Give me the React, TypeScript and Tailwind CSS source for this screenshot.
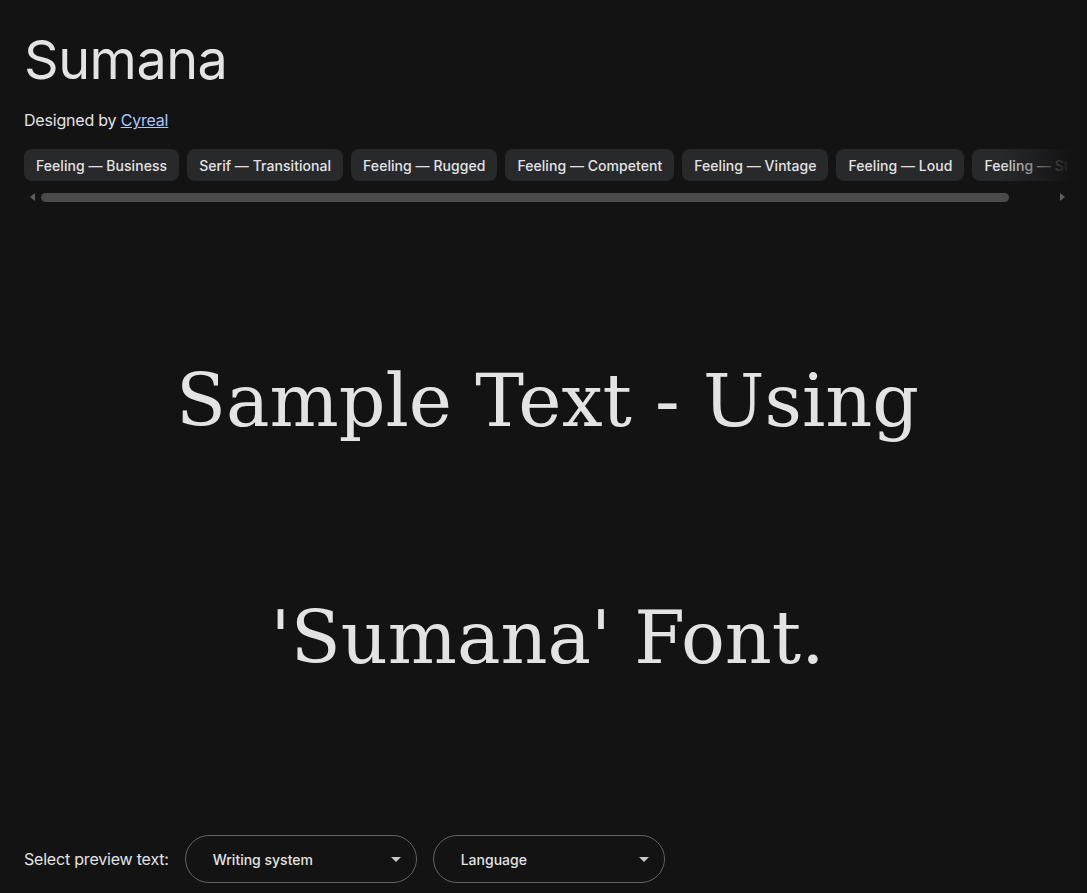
const tags = [
  "Feeling — Business",
  "Serif — Transitional",
  "Feeling — Rugged",
  "Feeling — Competent",
  "Feeling — Vintage",
  "Feeling — Loud",
  "Feeling — Stiff",
]

function Select({ label }: { label: string }) {
  return (
    <button className="flex h-[48px] w-[232px] items-center justify-between rounded-full border border-[#5f6368] pl-[27px] pr-[15px] text-[14px] font-medium text-[#e3e3e3]">
      <span>{label}</span>
      <svg width="10" height="5" viewBox="0 0 10 5">
        <path d="M0 0 L10 0 L5 5 Z" fill="#c4c7c5" />
      </svg>
    </button>
  )
}

export default function App() {
  return (
    <div
      className="flex min-h-[893px] flex-col bg-[#131314] pl-[24px] pr-[16px] text-[#e3e3e3]"
      style={{ fontFamily: "Inter, Roboto, sans-serif" }}
    >
      <h1 className="mt-[24px] text-[54px] leading-[72px] font-normal tracking-[-0.5px]">Sumana</h1>

      <p className="mt-[12px] text-[16px] leading-[24px] tracking-[-0.2px] text-[#e3e3e3]">
        Designed by{" "}
        <a href="#" className="text-[#a8c7fa] underline">
          Cyreal
        </a>
      </p>

      <div className="relative mt-[17px]">
        <div className="flex gap-[8px] overflow-hidden">
          {tags.map((t) => (
            <span
              key={t}
              className="flex h-[32px] shrink-0 items-center rounded-[8px] bg-[#28292b] px-[12px] text-[14px] font-medium tracking-[0.05px] text-[#e3e3e3]"
            >
              {t}
            </span>
          ))}
        </div>
        <div className="pointer-events-none absolute top-0 right-0 h-[32px] w-[70px] bg-gradient-to-r from-transparent to-[#131314]" />
      </div>

      <div className="mt-[11px] flex h-[10px] items-center gap-[2px] px-[3px]">
        <svg width="12" height="10" viewBox="0 0 12 10" className="shrink-0">
          <path d="M3 5 L8 1 L8 9 Z" fill="#5e5e5e" />
        </svg>
        <div className="h-[9px] w-[968px] rounded-full bg-[#4a4a4a]" />
        <div className="flex-1" />
        <svg width="12" height="10" viewBox="0 0 12 10" className="shrink-0">
          <path d="M9 5 L4 1 L4 9 Z" fill="#5e5e5e" />
        </svg>
      </div>

      <div
        className="mt-[80px] flex flex-col items-center text-[73px] leading-[237px] text-[#e3e3e3]"
        style={{ fontFamily: "'DejaVu Serif', serif" }}
      >
        <span>Sample Text - Using</span>
        <span>'Sumana' Font.</span>
      </div>

      <div className="mt-auto mb-[10px] flex items-center gap-[16px]">
        <span className="text-[16px] tracking-[-0.2px]">Select preview text:</span>
        <Select label="Writing system" />
        <Select label="Language" />
      </div>
    </div>
  )
}
